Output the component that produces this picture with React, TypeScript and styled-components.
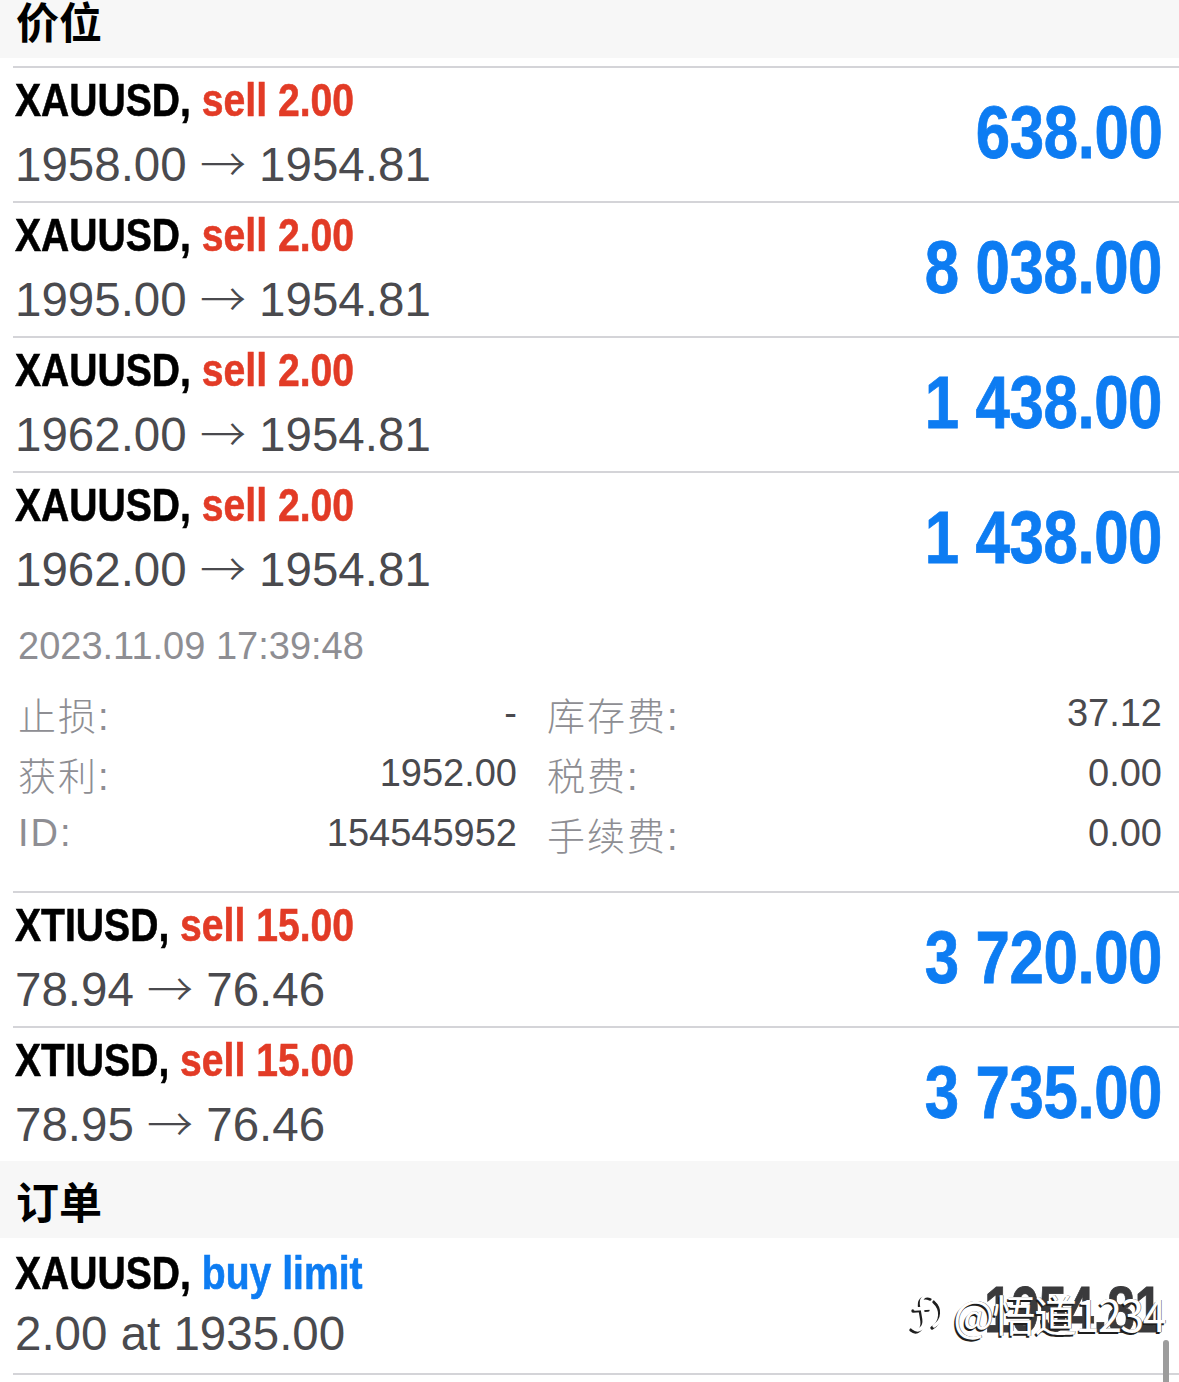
import styled, { createGlobalStyle } from 'styled-components'

const GlobalStyle = createGlobalStyle`
  html, body {
    margin: 0;
    padding: 0;
    background: #ffffff;
  }
  body {
    font-family: "Liberation Sans", "Noto Sans CJK SC", sans-serif;
    overflow: hidden;
  }
`

type Tone = 'red' | 'blue' | 'dark'

const toneColor = (tone: Tone) =>
  tone === 'red' ? '#e23b26' : tone === 'blue' ? '#0d7cf2' : '#3a3a3c'

interface Trade {
  symbol: string
  side: string
  sideTone: Tone
  from: string
  to?: string
  amount: string
  amountTone: Tone
}

const positions: Trade[] = [
  { symbol: 'XAUUSD', side: 'sell 2.00', sideTone: 'red', from: '1958.00', to: '1954.81', amount: '638.00', amountTone: 'blue' },
  { symbol: 'XAUUSD', side: 'sell 2.00', sideTone: 'red', from: '1995.00', to: '1954.81', amount: '8 038.00', amountTone: 'blue' },
  { symbol: 'XAUUSD', side: 'sell 2.00', sideTone: 'red', from: '1962.00', to: '1954.81', amount: '1 438.00', amountTone: 'blue' },
  { symbol: 'XAUUSD', side: 'sell 2.00', sideTone: 'red', from: '1962.00', to: '1954.81', amount: '1 438.00', amountTone: 'blue' },
]

const oilPositions: Trade[] = [
  { symbol: 'XTIUSD', side: 'sell 15.00', sideTone: 'red', from: '78.94', to: '76.46', amount: '3 720.00', amountTone: 'blue' },
  { symbol: 'XTIUSD', side: 'sell 15.00', sideTone: 'red', from: '78.95', to: '76.46', amount: '3 735.00', amountTone: 'blue' },
]

const orders: Trade[] = [
  { symbol: 'XAUUSD', side: 'buy limit', sideTone: 'blue', from: '2.00 at 1935.00', amount: '1954.81', amountTone: 'dark' },
]

const details = [
  ['止损:', '-', '库存费:', '37.12'],
  ['获利:', '1952.00', '税费:', '0.00'],
  ['ID:', '154545952', '手续费:', '0.00'],
]

function TradeRow({ trade, noBorder }: { trade: Trade; noBorder?: boolean }) {
  return (
    <Row $noBorder={noBorder}>
      <RowText>
        <Title>
          {trade.symbol}, <Side $tone={trade.sideTone}>{trade.side}</Side>
        </Title>
        <Prices>
          {trade.from}
          {trade.to && (
            <>
              {' '}
              <Arrow>→</Arrow> {trade.to}
            </>
          )}
        </Prices>
      </RowText>
      <Amount $tone={trade.amountTone}>{trade.amount}</Amount>
    </Row>
  )
}

function App() {
  return (
    <Page>
      <GlobalStyle />
      <Inner>
        <SectionHeader>价位</SectionHeader>
        <List $gap>
          {positions.map((p, i) => (
            <TradeRow key={i} trade={p} />
          ))}
          <Details>
            <DateLine>2023.11.09 17:39:48</DateLine>
            <DetailGrid>
              {details.map((d, i) => (
                <DetailPair key={i}>
                  <DetailCell>
                    <Label>{d[0]}</Label>
                    <Value>{d[1]}</Value>
                  </DetailCell>
                  <DetailCell>
                    <Label>{d[2]}</Label>
                    <Value>{d[3]}</Value>
                  </DetailCell>
                </DetailPair>
              ))}
            </DetailGrid>
          </Details>
          {oilPositions.map((p, i) => (
            <TradeRow key={i} trade={p} />
          ))}
        </List>
        <SectionHeader>订单</SectionHeader>
        <List>
          {orders.map((p, i) => (
            <TradeRow key={i} trade={p} noBorder />
          ))}
          <Divider />
        </List>
      </Inner>

      <Watermark>
        <svg width="38" height="46" viewBox="0 0 38 46" fill="none">
          <g stroke="#ffffff" strokeWidth="3.4" strokeLinecap="round">
            <path d="M23 7 C15 3 11 9 13 17 L15 29 C16 37 10 43 4 38" />
            <path d="M6 19 L21 18" />
            <path d="M27 10 C35 17 35 30 25 36" />
          </g>
        </svg>
        <span>@悟道1234</span>
      </Watermark>
      <ScrollThumb />
    </Page>
  )
}

const Page = styled.div`
  position: relative;
  width: 1179px;
  height: 1382px;
  overflow: hidden;
  background: #ffffff;
`

const Inner = styled.div`
  margin-top: -19px;
`

const SectionHeader = styled.div`
  height: 77px;
  background: #f7f7f7;
  display: flex;
  align-items: center;
  padding-left: 16px;
  font-family: "Noto Sans CJK SC", sans-serif;
  font-size: 43px;
  font-weight: 700;
  color: #000000;
`

const List = styled.div<{ $gap?: boolean }>`
  padding-top: ${(p) => (p.$gap ? '8px' : '0')};
`

const Row = styled.div<{ $noBorder?: boolean }>`
  margin-left: 13px;
  height: 135px;
  box-sizing: border-box;
  border-top: ${(p) => (p.$noBorder ? 'none' : '2px solid #d4d4d8')};
  display: flex;
  align-items: center;
  justify-content: space-between;
  padding: 0 17px 4px 2px;
`

const RowText = styled.div`
  display: flex;
  flex-direction: column;
`

// no condensed face is installed, so the bold sans is narrowed
const Title = styled.div`
  font-family: "Liberation Sans", sans-serif;
  font-size: 46px;
  font-weight: 700;
  line-height: 60px;
  color: #000000;
  white-space: nowrap;
  transform: scaleX(0.85);
  transform-origin: left center;
  -webkit-text-stroke: 0.6px currentColor;
`

const Side = styled.span<{ $tone: Tone }>`
  color: ${(p) => toneColor(p.$tone)};
`

const Prices = styled.div`
  font-family: "Liberation Sans", sans-serif;
  font-size: 47.5px;
  line-height: 62px;
  color: #4a4a4e;
  white-space: nowrap;
`

const Arrow = styled.span`
  font-family: "Noto Sans CJK SC", sans-serif;
  font-weight: 300;
  font-size: 46px;
`

const Amount = styled.div<{ $tone: Tone }>`
  font-family: "Liberation Sans", sans-serif;
  font-size: ${(p) => (p.$tone === 'dark' ? '64px' : '74px')};
  font-weight: 700;
  color: ${(p) => toneColor(p.$tone)};
  white-space: nowrap;
  transform: scaleX(${(p) => (p.$tone === 'dark' ? 0.78 : 0.835)});
  transform-origin: right center;
  letter-spacing: -0.5px;
  -webkit-text-stroke: 0.8px currentColor;
  margin-top: ${(p) => (p.$tone === 'dark' ? '12px' : '0')};
`

const Details = styled.div`
  padding: 20px 17px 28px 18px;
`

const DateLine = styled.div`
  font-size: 38px;
  line-height: 40px;
  color: #8e8e93;
`

const DetailGrid = styled.div`
  margin-top: 17px;
  display: flex;
  flex-direction: column;
`

const DetailPair = styled.div`
  display: grid;
  grid-template-columns: 499px 615px;
  column-gap: 30px;
  height: 60px;
`

const DetailCell = styled.div`
  display: flex;
  align-items: center;
  justify-content: space-between;
  font-size: 38px;
`

const Label = styled.span`
  font-family: "Liberation Sans", "Noto Sans CJK SC", sans-serif;
  font-weight: 300;
  color: #8e8e93;
  letter-spacing: 2px;
`

const Value = styled.span`
  color: #4a4a4e;
`

const Divider = styled.div`
  margin-left: 13px;
  border-top: 2px solid #d4d4d8;
`

const Watermark = styled.div`
  position: absolute;
  right: 14px;
  bottom: 38px;
  display: flex;
  align-items: center;
  gap: 6px;
  font-family: "Noto Sans CJK SC", sans-serif;
  font-size: 43px;
  font-weight: 400;
  color: #ffffff;
  text-shadow: -1.5px 1.5px 0 #1e1e1e, 0.5px -0.5px 0 #555;
  letter-spacing: -1.5px;

  & svg {
    filter: drop-shadow(-2px 2px 0 #1e1e1e);
  }
`

const ScrollThumb = styled.div`
  position: absolute;
  right: 10px;
  bottom: -6px;
  width: 6px;
  height: 48px;
  border-radius: 3px;
  background: #9c9c9c;
`

export default App
